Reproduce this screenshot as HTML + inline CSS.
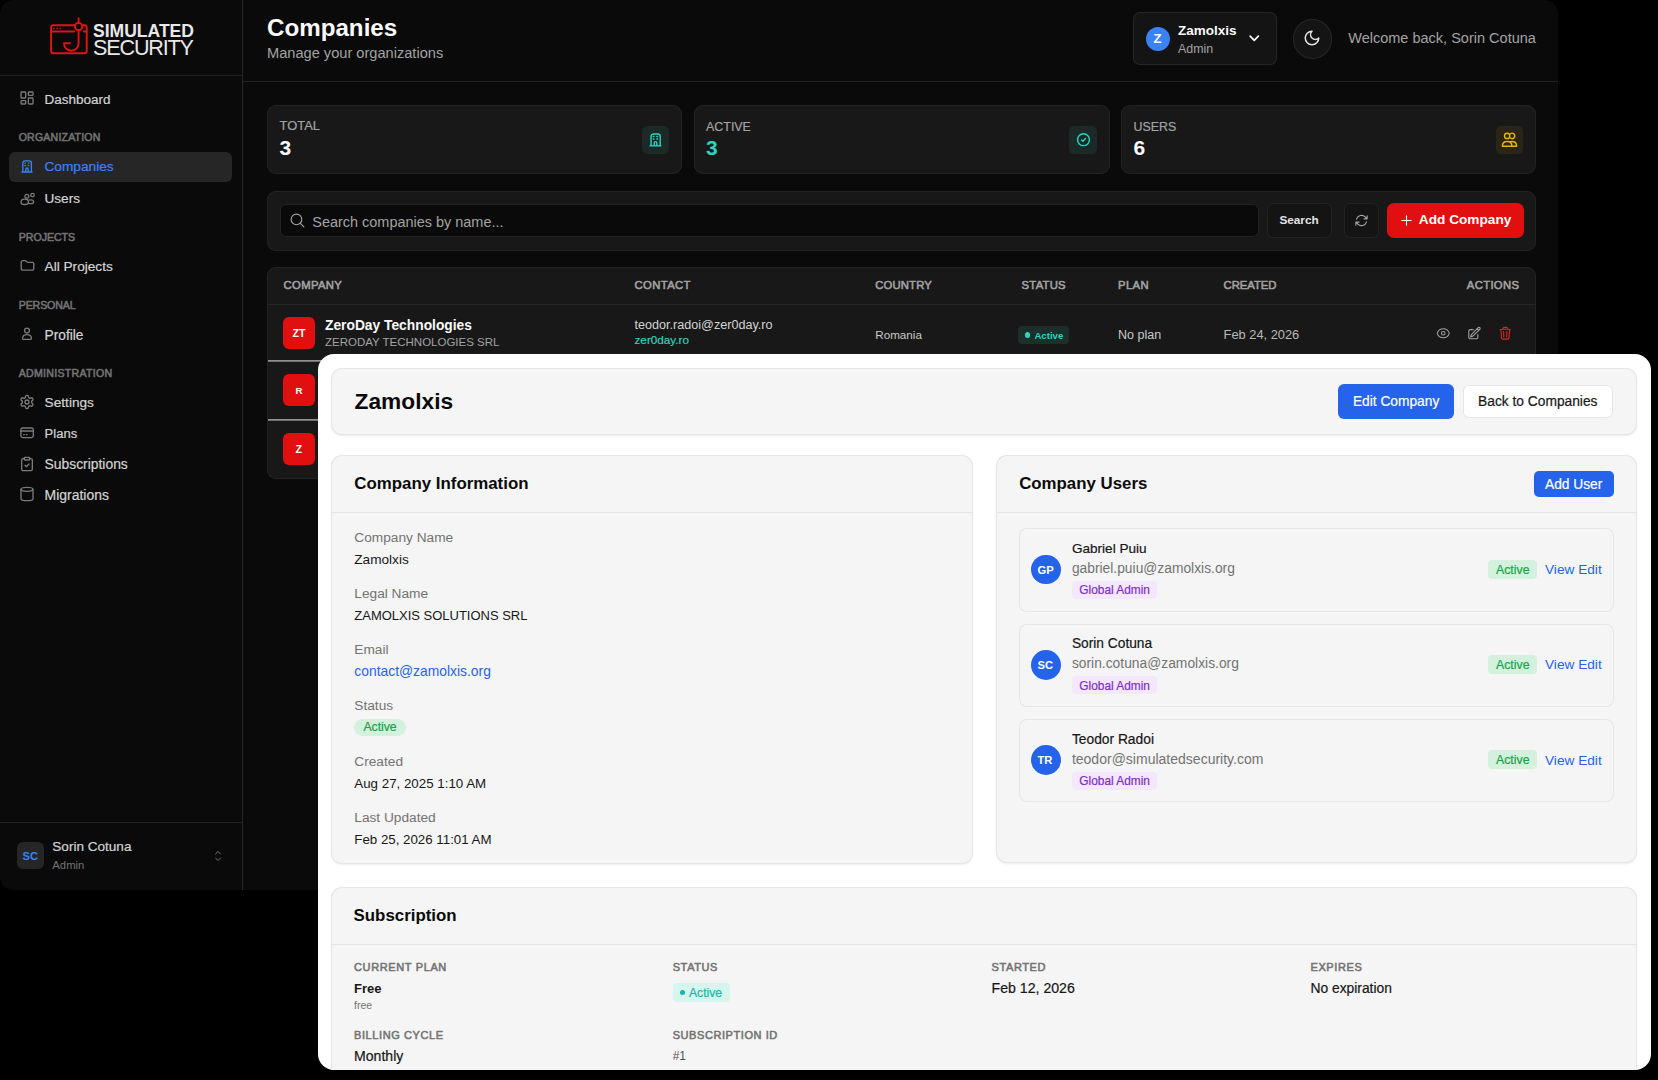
<!DOCTYPE html><html><head><meta charset="utf-8"><style>
html,body{margin:0;padding:0;background:#000;}
body{width:1658px;height:1080px;overflow:hidden;position:relative;font-family:"Liberation Sans",sans-serif;}
.t{position:absolute;white-space:nowrap;line-height:1;}
.r{position:absolute;}
#dark{position:absolute;left:0;top:0;width:1558px;height:890px;background:#0a0a0a;border-radius:14px;overflow:hidden;}
#light{position:absolute;left:318px;top:354px;width:1333px;height:716px;background:#fff;border-radius:16px;overflow:hidden;}
</style></head><body>
<div id="dark">
<div class="r" style="left:242.00px;top:0.00px;width:1.00px;height:890.00px;background:#262626;"></div>
<div class="r" style="left:0.00px;top:75.00px;width:242.00px;height:1.00px;background:#222222;"></div>
<div class="r" style="left:0.00px;top:822.00px;width:242.00px;height:1.00px;background:#222222;"></div>
<div class="r" style="left:243.00px;top:81.00px;width:1315.00px;height:1.00px;background:#222222;"></div>
<svg class="r" style="left:46.00px;top:14.00px;" width="46" height="46" viewBox="0 0 46 46" fill="none" stroke="#e01414" stroke-width="1.9" stroke-linecap="round" stroke-linejoin="round"><path d="M28.9 11.2H7.1A2 2 0 0 0 5.1 13.2V37.3A2 2 0 0 0 7.1 39.3H38.7A2 2 0 0 0 40.7 37.3V13.2A2 2 0 0 0 38.7 11.2H36.3"/><path d="M5.1 17.5H28.1M37.7 17.5H40.7"/><circle cx="32.6" cy="12.6" r="3.7"/><path d="M32.6 4.1V8.9M32.6 16.3V29.6A7.3 7.1 0 0 1 18 29.6V29.3H24"/><path d="M7.9 14.5h.1M11 14.5h.1M14.3 14.5h.1" stroke-width="1.6"/></svg>
<div class="t" style="left:93.00px;top:22.96px;font-size:17.54px;color:#e8e8e8;font-weight:700;">SIMULATED</div>
<div class="t" style="left:93.00px;top:36.63px;font-size:21.60px;color:#e8e8e8;letter-spacing:-1.173px;">SECURITY</div>
<svg class="r" style="left:18.60px;top:90.30px;" width="16" height="16" viewBox="0 0 16 16" fill="none" stroke="#7a7a7a" stroke-width="1.33" stroke-linecap="round" stroke-linejoin="round"><rect x="2" y="2" width="4.67" height="6" rx=".67"/><rect x="9.33" y="2" width="4.67" height="3.33" rx=".67"/><rect x="9.33" y="8" width="4.67" height="6" rx=".67"/><rect x="2" y="10.67" width="4.67" height="3.33" rx=".67"/></svg>
<div class="t" style="left:44.50px;top:92.59px;font-size:13.49px;color:#d4d4d4;-webkit-text-stroke:0.2px;">Dashboard</div>
<div class="t" style="left:18.70px;top:131.83px;font-size:10.60px;color:#737373;-webkit-text-stroke:0.55px;letter-spacing:0.173px;">ORGANIZATION</div>
<div class="r" style="left:9.00px;top:152.00px;width:223.00px;height:30.00px;background:#262626;border-radius:6px;"></div>
<svg class="r" style="left:18.60px;top:158.10px;" width="16" height="16" viewBox="0 0 16 16" fill="none" stroke="#3b82f6" stroke-width="1.33" stroke-linecap="round" stroke-linejoin="round"><path d="M2.9 14H13.1M3.8 14V5A2.2 2.2 0 0 1 6 2.8H10.2A2.2 2.2 0 0 1 12.4 5V14M6.8 14V11.2A1.2 1.2 0 0 1 9.2 11.2V14M5.9 5.1h.6M9.3 5.1h.6M5.9 7.5h.6M9.3 7.5h.6"/></svg>
<div class="t" style="left:44.50px;top:160.43px;font-size:13.68px;color:#3b82f6;-webkit-text-stroke:0.2px;">Companies</div>
<svg class="r" style="left:18.60px;top:190.50px;" width="16" height="16" viewBox="0 0 16 16" fill="none" stroke="#7a7a7a" stroke-width="1.33" stroke-linecap="round" stroke-linejoin="round"><circle cx="7.9" cy="5.3" r="1.9"/><circle cx="13.5" cy="4.1" r="1.8"/><path d="M2 10.9C2 9 3.6 8.2 5.7 8.2S9.4 9 9.4 10.9 7.8 13.5 5.7 13.5 2 12.8 2 10.9Z"/><path d="M9.9 9.2C10.5 9 11.2 8.9 12 8.9 13.5 8.9 14.6 9.6 14.6 10.9S13.5 12.7 12 12.7C11.1 12.7 10.3 12.6 9.7 12.3"/></svg>
<div class="t" style="left:44.50px;top:191.99px;font-size:13.60px;color:#d4d4d4;-webkit-text-stroke:0.2px;">Users</div>
<div class="t" style="left:18.80px;top:231.73px;font-size:10.60px;color:#737373;-webkit-text-stroke:0.55px;letter-spacing:-0.034px;">PROJECTS</div>
<svg class="r" style="left:18.60px;top:257.90px;" width="16" height="16" viewBox="0 0 16 16" fill="none" stroke="#7a7a7a" stroke-width="1.33" stroke-linecap="round" stroke-linejoin="round"><path d="M2.2 4.2A1.5 1.5 0 0 1 3.7 2.7H6.2A1.2 1.2 0 0 1 7.1 3.1L7.8 3.9A1.2 1.2 0 0 0 8.7 4.3H13.3A1.5 1.5 0 0 1 14.8 5.8V10.6A1.5 1.5 0 0 1 13.3 12.1H3.7A1.5 1.5 0 0 1 2.2 10.6Z"/></svg>
<div class="t" style="left:44.60px;top:259.57px;font-size:13.63px;color:#d4d4d4;-webkit-text-stroke:0.2px;">All Projects</div>
<div class="t" style="left:18.70px;top:299.73px;font-size:10.60px;color:#737373;-webkit-text-stroke:0.55px;letter-spacing:-0.104px;">PERSONAL</div>
<svg class="r" style="left:18.60px;top:326.10px;" width="16" height="16" viewBox="0 0 16 16" fill="none" stroke="#7a7a7a" stroke-width="1.33" stroke-linecap="round" stroke-linejoin="round"><circle cx="8" cy="4.6" r="2.4"/><path d="M3.6 12.4C3.6 10 5.6 8.7 8 8.7S12.4 10 12.4 12.4C12.4 13.1 11.9 13.4 11.2 13.4H4.8C4.1 13.4 3.6 13.1 3.6 12.4Z"/></svg>
<div class="t" style="left:44.60px;top:328.59px;font-size:13.72px;color:#d4d4d4;-webkit-text-stroke:0.2px;">Profile</div>
<div class="t" style="left:18.70px;top:367.63px;font-size:10.60px;color:#737373;-webkit-text-stroke:0.55px;letter-spacing:0.277px;">ADMINISTRATION</div>
<svg class="r" style="left:18.60px;top:393.50px;" width="16" height="16" viewBox="0 0 16 16" fill="none" stroke="#7a7a7a" stroke-width="1.33" stroke-linecap="round" stroke-linejoin="round"><g transform="scale(.6667)"><path d="M12.22 2h-.44a2 2 0 0 0-2 2v.18a2 2 0 0 1-1 1.73l-.43.25a2 2 0 0 1-2 0l-.15-.08a2 2 0 0 0-2.73.73l-.22.38a2 2 0 0 0 .73 2.73l.15.1a2 2 0 0 1 1 1.72v.51a2 2 0 0 1-1 1.74l-.15.09a2 2 0 0 0-.73 2.73l.22.38a2 2 0 0 0 2.73.73l.15-.08a2 2 0 0 1 2 0l.43.25a2 2 0 0 1 1 1.73V20a2 2 0 0 0 2 2h.44a2 2 0 0 0 2-2v-.18a2 2 0 0 1 1-1.73l.43-.25a2 2 0 0 1 2 0l.15.08a2 2 0 0 0 2.73-.73l.22-.39a2 2 0 0 0-.73-2.73l-.15-.08a2 2 0 0 1-1-1.74v-.5a2 2 0 0 1 1-1.74l.15-.09a2 2 0 0 0 .73-2.73l-.22-.38a2 2 0 0 0-2.73-.73l-.15.08a2 2 0 0 1-2 0l-.43-.25a2 2 0 0 1-1-1.73V4a2 2 0 0 0-2-2z" stroke-width="2"/><circle cx="12" cy="12" r="3" stroke-width="2"/></g></svg>
<div class="t" style="left:44.60px;top:395.63px;font-size:13.67px;color:#d4d4d4;-webkit-text-stroke:0.2px;">Settings</div>
<svg class="r" style="left:18.60px;top:425.00px;" width="16" height="16" viewBox="0 0 16 16" fill="none" stroke="#7a7a7a" stroke-width="1.33" stroke-linecap="round" stroke-linejoin="round"><rect x="1.9" y="3" width="12.4" height="9.6" rx="1.8"/><path d="M1.9 6H14.3M4.6 9.6h.7M7.4 9.6h.7"/></svg>
<div class="t" style="left:44.60px;top:427.27px;font-size:13.03px;color:#d4d4d4;-webkit-text-stroke:0.2px;">Plans</div>
<svg class="r" style="left:18.60px;top:455.70px;" width="16" height="16" viewBox="0 0 16 16" fill="none" stroke="#7a7a7a" stroke-width="1.33" stroke-linecap="round" stroke-linejoin="round"><g transform="scale(.6667)" stroke-width="2"><rect width="8" height="4" x="8" y="2" rx="1" ry="1"/><path d="M16 4h2a2 2 0 0 1 2 2v14a2 2 0 0 1-2 2H6a2 2 0 0 1-2-2V6a2 2 0 0 1 2-2h2"/><path d="m9 14 2 2 4-4"/></g></svg>
<div class="t" style="left:44.60px;top:458.07px;font-size:13.86px;color:#d4d4d4;-webkit-text-stroke:0.2px;">Subscriptions</div>
<svg class="r" style="left:18.80px;top:486.10px;" width="16" height="16" viewBox="0 0 16 16" fill="none" stroke="#7a7a7a" stroke-width="1.33" stroke-linecap="round" stroke-linejoin="round"><g transform="scale(.6667)" stroke-width="2"><ellipse cx="12" cy="5" rx="9" ry="3"/><path d="M3 5V19A9 3 0 0 0 21 19V5"/></g></svg>
<div class="t" style="left:44.60px;top:488.61px;font-size:13.94px;color:#d4d4d4;-webkit-text-stroke:0.2px;">Migrations</div>
<div class="r" style="left:17.00px;top:842.00px;width:27.00px;height:27.00px;background:#262626;border-radius:6px;"></div>
<div class="t" style="left:22.50px;top:850.56px;font-size:11.16px;color:#3b82f6;font-weight:700;">SC</div>
<div class="t" style="left:52.30px;top:840.02px;font-size:13.57px;color:#d4d4d4;-webkit-text-stroke:0.2px;">Sorin Cotuna</div>
<div class="t" style="left:52.30px;top:860.02px;font-size:11.32px;color:#737373;">Admin</div>
<svg class="r" style="left:209.50px;top:847.50px;" width="16" height="16" viewBox="0 0 24 24" fill="none" stroke="#737373" stroke-width="1.5" stroke-linecap="round" stroke-linejoin="round"><path d="M8.25 15 12 18.75 15.75 15m-7.5-6L12 5.25 15.75 9"/></svg>
<div class="t" style="left:267.00px;top:16.15px;font-size:24.17px;color:#fafafa;font-weight:700;">Companies</div>
<div class="t" style="left:267.00px;top:46.34px;font-size:14.61px;color:#a3a3a3;">Manage your organizations</div>
<div class="r" style="left:1133.00px;top:12.00px;width:144.00px;height:53.00px;background:#141414;border-radius:7px;box-shadow:inset 0 0 0 1px #262626;"></div>
<div class="r" style="left:1146.00px;top:26.50px;width:24.00px;height:24.00px;background:#3b82f6;border-radius:12px;"></div>
<div class="t" style="left:1153.50px;top:31.72px;font-size:13.09px;color:#fff;font-weight:700;">Z</div>
<div class="t" style="left:1178.00px;top:23.88px;font-size:13.49px;color:#fafafa;font-weight:700;">Zamolxis</div>
<div class="t" style="left:1178.00px;top:43.00px;font-size:12.42px;color:#a3a3a3;">Admin</div>
<svg class="r" style="left:1245.70px;top:30.00px;" width="16.5" height="16.5" viewBox="0 0 24 24" fill="none" stroke="#fafafa" stroke-width="2.5" stroke-linecap="round" stroke-linejoin="round"><path d="m6 9 6 6 6-6"/></svg>
<div class="r" style="left:1292.50px;top:19.00px;width:39.50px;height:39.50px;background:#141414;border-radius:20px;box-shadow:inset 0 0 0 1px #262626;"></div>
<svg class="r" style="left:1303.20px;top:28.90px;" width="18" height="18" viewBox="0 0 24 24" fill="none" stroke="#e5e5e5" stroke-width="2" stroke-linecap="round" stroke-linejoin="round"><path d="M12 3a6 6 0 0 0 9 9 9 9 0 1 1-9-9Z"/></svg>
<div class="t" style="left:1348.20px;top:31.21px;font-size:14.53px;color:#a3a3a3;">Welcome back, Sorin Cotuna</div>
<div class="r" style="left:267.00px;top:105.30px;width:415.00px;height:68.50px;background:#181818;border-radius:9px;box-shadow:inset 0 0 0 1px #232323;"></div>
<div class="t" style="left:279.60px;top:120.08px;font-size:12.91px;color:#a3a3a3;-webkit-text-stroke:0.2px;">TOTAL</div>
<div class="t" style="left:279.60px;top:137.23px;font-size:21.00px;color:#fafafa;font-weight:700;">3</div>
<div class="r" style="left:641.80px;top:126.00px;width:27.50px;height:27.50px;background:#1b2a27;border-radius:5px;"></div>
<svg class="r" style="left:647.05px;top:131.25px;" width="17" height="17" viewBox="0 0 16 16" fill="none" stroke="#2dd4bf" stroke-width="1.33" stroke-linecap="round" stroke-linejoin="round"><path d="M2.9 14H13.1M3.8 14V5A2.2 2.2 0 0 1 6 2.8H10.2A2.2 2.2 0 0 1 12.4 5V14M6.8 14V11.2A1.2 1.2 0 0 1 9.2 11.2V14M5.9 5.1h.6M9.3 5.1h.6M5.9 7.5h.6M9.3 7.5h.6"/></svg>
<div class="r" style="left:693.50px;top:105.30px;width:416.00px;height:68.50px;background:#181818;border-radius:9px;box-shadow:inset 0 0 0 1px #232323;"></div>
<div class="t" style="left:706.10px;top:120.51px;font-size:12.40px;color:#a3a3a3;-webkit-text-stroke:0.2px;">ACTIVE</div>
<div class="t" style="left:706.10px;top:137.23px;font-size:21.00px;color:#2dd4bf;font-weight:700;">3</div>
<div class="r" style="left:1069.30px;top:126.00px;width:27.50px;height:27.50px;background:#1b2a27;border-radius:5px;"></div>
<svg class="r" style="left:1074.55px;top:131.25px;" width="17" height="17" viewBox="0 0 16 16" fill="none" stroke="#2dd4bf" stroke-width="1.33" stroke-linecap="round" stroke-linejoin="round"><circle cx="8" cy="8.2" r="5.6"/><path d="M6.1 8.4 7.5 9.7 9.9 7.1"/></svg>
<div class="r" style="left:1121.00px;top:105.30px;width:415.00px;height:68.50px;background:#181818;border-radius:9px;box-shadow:inset 0 0 0 1px #232323;"></div>
<div class="t" style="left:1133.60px;top:120.51px;font-size:12.40px;color:#a3a3a3;-webkit-text-stroke:0.2px;">USERS</div>
<div class="t" style="left:1133.60px;top:137.23px;font-size:21.00px;color:#fafafa;font-weight:700;">6</div>
<div class="r" style="left:1495.80px;top:126.00px;width:27.50px;height:27.50px;background:#2a2514;border-radius:5px;"></div>
<svg class="r" style="left:1501.05px;top:131.25px;" width="17" height="17" viewBox="0 0 16 16" fill="none" stroke="#eab308" stroke-width="1.33" stroke-linecap="round" stroke-linejoin="round"><circle cx="5.8" cy="4.6" r="2.5"/><path d="M8.9 2.6A2.5 2.5 0 1 1 8.9 6.6"/><path d="M1.3 14.4C1.3 11.4 3.3 9.9 5.8 9.9S10.3 11.4 10.3 14.4Z"/><path d="M8.7 10.1C9.2 9.95 9.7 9.9 10.2 9.9 12.7 9.9 14.7 11.4 14.7 14.4H10.3"/></svg>
<div class="r" style="left:267.00px;top:190.50px;width:1269.00px;height:60.00px;background:#181818;border-radius:9px;box-shadow:inset 0 0 0 1px #232323;"></div>
<div class="r" style="left:279.50px;top:203.80px;width:979.00px;height:33.50px;background:#0a0a0a;border-radius:6px;box-shadow:inset 0 0 0 1px #232323;"></div>
<svg class="r" style="left:288.50px;top:212.00px;" width="17" height="17" viewBox="0 0 24 24" fill="none" stroke="#a3a3a3" stroke-width="1.6" stroke-linecap="round" stroke-linejoin="round"><path d="m21 21-5.197-5.197m0 0A7.5 7.5 0 1 0 5.196 5.196a7.5 7.5 0 0 0 10.607 10.607Z"/></svg>
<div class="t" style="left:312.30px;top:215.47px;font-size:14.46px;color:#a3a3a3;">Search companies by name...</div>
<div class="r" style="left:1267.00px;top:203.00px;width:64.50px;height:34.50px;background:#141414;border-radius:6px;box-shadow:inset 0 0 0 1px #232323;"></div>
<div class="t" style="left:1279.40px;top:214.23px;font-size:11.78px;color:#e5e5e5;font-weight:700;">Search</div>
<div class="r" style="left:1343.50px;top:203.00px;width:35.00px;height:34.50px;background:#141414;border-radius:6px;box-shadow:inset 0 0 0 1px #232323;"></div>
<svg class="r" style="left:1354.00px;top:213.00px;" width="15" height="15" viewBox="0 0 24 24" fill="none" stroke="#a3a3a3" stroke-width="1.8" stroke-linecap="round" stroke-linejoin="round"><path d="M16.023 9.348h4.992v-.001M2.985 19.644v-4.992m0 0h4.992m-4.993 0 3.181 3.183a8.25 8.25 0 0 0 13.803-3.7M4.031 9.865a8.25 8.25 0 0 1 13.803-3.7l3.181 3.182m0-4.991v4.99"/></svg>
<div class="r" style="left:1387.00px;top:203.00px;width:136.50px;height:35.00px;background:#e10f0f;border-radius:7px;"></div>
<svg class="r" style="left:1398.50px;top:213.00px;" width="15" height="15" viewBox="0 0 24 24" fill="none" stroke="#fff" stroke-width="1.8" stroke-linecap="round" stroke-linejoin="round"><path d="M12 4.5v15m7.5-7.5h-15"/></svg>
<div class="t" style="left:1418.80px;top:213.24px;font-size:13.66px;color:#fff;font-weight:700;">Add Company</div>
<div class="r" style="left:267.00px;top:267.30px;width:1269.00px;height:211.50px;background:#181818;border-radius:9px;box-shadow:inset 0 0 0 1px #232323;"></div>
<div class="r" style="left:267.00px;top:304.00px;width:1269.00px;height:1.00px;background:#262626;"></div>
<div class="t" style="left:283.60px;top:280.34px;font-size:11.30px;color:#a3a3a3;-webkit-text-stroke:0.55px;letter-spacing:0.334px;">COMPANY</div>
<div class="t" style="left:634.50px;top:280.34px;font-size:11.30px;color:#a3a3a3;-webkit-text-stroke:0.55px;letter-spacing:0.371px;">CONTACT</div>
<div class="t" style="left:875.20px;top:280.34px;font-size:11.30px;color:#a3a3a3;-webkit-text-stroke:0.55px;letter-spacing:0.156px;">COUNTRY</div>
<div class="t" style="left:1021.60px;top:280.34px;font-size:11.30px;color:#a3a3a3;-webkit-text-stroke:0.55px;letter-spacing:0.221px;">STATUS</div>
<div class="t" style="left:1118.10px;top:280.34px;font-size:11.30px;color:#a3a3a3;-webkit-text-stroke:0.55px;letter-spacing:0.328px;">PLAN</div>
<div class="t" style="left:1223.60px;top:280.34px;font-size:11.30px;color:#a3a3a3;-webkit-text-stroke:0.55px;letter-spacing:-0.059px;">CREATED</div>
<div class="t" style="left:1466.80px;top:280.34px;font-size:11.30px;color:#a3a3a3;-webkit-text-stroke:0.55px;letter-spacing:0.329px;">ACTIONS</div>
<div class="r" style="left:267.50px;top:360.00px;width:1268.00px;height:2.00px;background:linear-gradient(#a0a0a0,#606060);"></div>
<div class="r" style="left:267.50px;top:419.00px;width:1268.00px;height:2.00px;background:linear-gradient(#a0a0a0,#606060);"></div>
<div class="r" style="left:283.20px;top:317.00px;width:31.60px;height:31.70px;background:#e10f0f;border-radius:6px;"></div>
<div class="t" style="left:292.50px;top:328.00px;font-size:10.64px;color:#fff;font-weight:700;">ZT</div>
<div class="t" style="left:325.00px;top:319.22px;font-size:13.80px;color:#fafafa;font-weight:700;">ZeroDay Technologies</div>
<div class="t" style="left:325.00px;top:336.97px;font-size:11.50px;color:#a3a3a3;">ZERODAY TECHNOLOGIES SRL</div>
<div class="t" style="left:634.50px;top:318.54px;font-size:12.61px;color:#d4d4d4;">teodor.radoi@zer0day.ro</div>
<div class="t" style="left:634.50px;top:334.48px;font-size:11.72px;color:#2dd4bf;-webkit-text-stroke:0.2px;">zer0day.ro</div>
<div class="t" style="left:875.20px;top:328.61px;font-size:11.69px;color:#c9c9c9;">Romania</div>
<div class="r" style="left:1018.30px;top:326.00px;width:50.60px;height:18.30px;background:#1b2f2b;border-radius:4px;"></div>
<div class="r" style="left:1024.50px;top:332.00px;width:5.50px;height:5.50px;background:#2dd4bf;border-radius:3px;"></div>
<div class="t" style="left:1034.40px;top:330.85px;font-size:9.63px;color:#2dd4bf;font-weight:700;">Active</div>
<div class="t" style="left:1118.10px;top:328.92px;font-size:12.50px;color:#c9c9c9;">No plan</div>
<div class="t" style="left:1223.60px;top:328.65px;font-size:12.83px;color:#b8b8b8;">Feb 24, 2026</div>
<svg class="r" style="left:1435.75px;top:325.55px;" width="14.5" height="14.5" viewBox="0 0 24 24" fill="none" stroke="#a3a3a3" stroke-width="1.7" stroke-linecap="round" stroke-linejoin="round"><path d="M2.036 12.322a1.012 1.012 0 0 1 0-.639C3.423 7.51 7.36 4.5 12 4.5c4.638 0 8.573 3.007 9.963 7.178.07.207.07.431 0 .639C20.577 16.49 16.64 19.5 12 19.5c-4.638 0-8.573-3.007-9.963-7.178Z"/><path d="M15 12a3 3 0 1 1-6 0 3 3 0 0 1 6 0Z"/></svg>
<svg class="r" style="left:1467.40px;top:325.50px;" width="14.5" height="14.5" viewBox="0 0 24 24" fill="none" stroke="#a3a3a3" stroke-width="1.8" stroke-linecap="round" stroke-linejoin="round"><path d="m16.862 4.487 1.687-1.688a1.875 1.875 0 1 1 2.652 2.652L10.582 16.07a4.5 4.5 0 0 1-1.897 1.13L6 18l.8-2.685a4.5 4.5 0 0 1 1.13-1.897l8.932-8.931Zm0 0L19.5 7.125M18 14v4.75A2.25 2.25 0 0 1 15.75 21H5.25A2.25 2.25 0 0 1 3 18.75V8.25A2.25 2.25 0 0 1 5.25 6H10"/></svg>
<svg class="r" style="left:1498.30px;top:325.55px;" width="14.5" height="14.5" viewBox="0 0 24 24" fill="none" stroke="#dc2626" stroke-width="1.8" stroke-linecap="round" stroke-linejoin="round"><path d="m14.74 9-.346 9m-4.788 0L9.26 9m9.968-3.21c.342.052.682.107 1.022.166m-1.022-.165L18.16 19.673a2.25 2.25 0 0 1-2.244 2.077H8.084a2.25 2.25 0 0 1-2.244-2.077L4.772 5.79m14.456 0a48.108 48.108 0 0 0-3.478-.397m-12 .562c.34-.059.68-.114 1.022-.165m0 0a48.11 48.11 0 0 1 3.478-.397m7.5 0v-.916c0-1.18-.91-2.164-2.09-2.201a51.964 51.964 0 0 0-3.32 0c-1.18.037-2.09 1.022-2.09 2.201v.916m7.5 0a48.667 48.667 0 0 0-7.5 0"/></svg>
<div class="r" style="left:283.20px;top:374.00px;width:31.60px;height:31.60px;background:#e10f0f;border-radius:6px;"></div>
<div class="t" style="left:295.50px;top:385.80px;font-size:9.70px;color:#fff;font-weight:700;">R</div>
<div class="r" style="left:283.20px;top:433.00px;width:31.60px;height:31.70px;background:#e10f0f;border-radius:6px;"></div>
<div class="t" style="left:295.50px;top:444.00px;font-size:10.64px;color:#fff;font-weight:700;">Z</div>
</div>
<div id="light">
<div class="r" style="left:12.50px;top:14.20px;width:1306.00px;height:67.00px;background:#f5f5f5;border-radius:11px;box-shadow:inset 0 0 0 1px #e6e6e6,0 1px 2px rgba(0,0,0,.08);"></div>
<div class="t" style="left:36.60px;top:35.98px;font-size:22.72px;color:#0a0a0a;font-weight:700;">Zamolxis</div>
<div class="r" style="left:1020.00px;top:30.20px;width:116.40px;height:34.50px;background:#2563eb;border-radius:6px;"></div>
<div class="t" style="left:1034.90px;top:41.36px;font-size:13.76px;color:#fff;-webkit-text-stroke:0.2px;">Edit Company</div>
<div class="r" style="left:1145.00px;top:30.80px;width:150.10px;height:33.50px;background:#fff;border-radius:6px;box-shadow:inset 0 0 0 1px #e6e6e6;"></div>
<div class="t" style="left:1160.10px;top:41.34px;font-size:13.78px;color:#171717;-webkit-text-stroke:0.2px;">Back to Companies</div>
<div class="r" style="left:12.50px;top:101.30px;width:642.00px;height:408.50px;background:#f5f5f5;border-radius:11px;box-shadow:inset 0 0 0 1px #e6e6e6,0 1px 2px rgba(0,0,0,.08);"></div>
<div class="r" style="left:13.00px;top:158.00px;width:641.00px;height:1.00px;background:#e6e6e6;"></div>
<div class="t" style="left:36.30px;top:122.32px;font-size:16.88px;color:#0a0a0a;font-weight:700;">Company Information</div>
<div class="t" style="left:36.30px;top:177.21px;font-size:13.70px;color:#737373;">Company Name</div>
<div class="t" style="left:36.30px;top:198.68px;font-size:13.62px;color:#171717;">Zamolxis</div>
<div class="t" style="left:36.30px;top:233.21px;font-size:13.70px;color:#737373;">Legal Name</div>
<div class="t" style="left:36.30px;top:255.21px;font-size:12.99px;color:#171717;">ZAMOLXIS SOLUTIONS SRL</div>
<div class="t" style="left:36.30px;top:289.21px;font-size:13.70px;color:#737373;">Email</div>
<div class="t" style="left:36.30px;top:311.48px;font-size:13.86px;color:#2563eb;">contact@zamolxis.org</div>
<div class="t" style="left:36.30px;top:345.21px;font-size:13.70px;color:#737373;">Status</div>
<div class="t" style="left:36.30px;top:401.21px;font-size:13.70px;color:#737373;">Created</div>
<div class="t" style="left:36.30px;top:422.92px;font-size:13.34px;color:#171717;">Aug 27, 2025 1:10 AM</div>
<div class="t" style="left:36.30px;top:457.21px;font-size:13.70px;color:#737373;">Last Updated</div>
<div class="t" style="left:36.30px;top:478.95px;font-size:13.30px;color:#171717;">Feb 25, 2026 11:01 AM</div>
<div class="r" style="left:35.80px;top:364.50px;width:51.80px;height:17.80px;background:#d3f1dd;border-radius:9px;"></div>
<div class="t" style="left:45.40px;top:367.15px;font-size:12.23px;color:#16a34a;-webkit-text-stroke:0.2px;">Active</div>
<div class="r" style="left:677.80px;top:101.30px;width:641.00px;height:408.00px;background:#f5f5f5;border-radius:11px;box-shadow:inset 0 0 0 1px #e6e6e6,0 1px 2px rgba(0,0,0,.08);"></div>
<div class="r" style="left:678.30px;top:158.00px;width:640.00px;height:1.00px;background:#e6e6e6;"></div>
<div class="t" style="left:701.20px;top:121.96px;font-size:16.84px;color:#0a0a0a;font-weight:700;">Company Users</div>
<div class="r" style="left:1216.00px;top:116.80px;width:80.00px;height:26.00px;background:#2563eb;border-radius:5px;"></div>
<div class="t" style="left:1227.00px;top:123.57px;font-size:13.75px;color:#fff;-webkit-text-stroke:0.2px;">Add User</div>
<div class="r" style="left:701.40px;top:174.30px;width:594.50px;height:83.30px;background:#f5f5f5;border-radius:8px;box-shadow:inset 0 0 0 1px #e6e6e6;"></div>
<div class="r" style="left:713.10px;top:200.80px;width:29.60px;height:29.60px;background:#2563eb;border-radius:15px;"></div>
<div class="t" style="left:719.50px;top:210.52px;font-size:11.20px;color:#fff;font-weight:700;">GP</div>
<div class="t" style="left:753.90px;top:188.40px;font-size:13.59px;color:#171717;-webkit-text-stroke:0.2px;">Gabriel Puiu</div>
<div class="t" style="left:753.90px;top:208.11px;font-size:13.82px;color:#737373;">gabriel.puiu@zamolxis.org</div>
<div class="r" style="left:753.90px;top:227.10px;width:85.50px;height:18.20px;background:#f3e8ff;border-radius:4px;"></div>
<div class="t" style="left:761.30px;top:231.44px;font-size:11.89px;color:#7e2fc0;-webkit-text-stroke:0.2px;">Global Admin</div>
<div class="r" style="left:1169.70px;top:206.00px;width:49.60px;height:19.00px;background:#d3f1dd;border-radius:4px;"></div>
<div class="t" style="left:1178.00px;top:209.59px;font-size:12.30px;color:#16a34a;-webkit-text-stroke:0.2px;">Active</div>
<div class="t" style="left:1227.00px;top:209.24px;font-size:13.66px;color:#2563eb;">View Edit</div>
<div class="r" style="left:701.40px;top:269.50px;width:594.50px;height:83.30px;background:#f5f5f5;border-radius:8px;box-shadow:inset 0 0 0 1px #e6e6e6;"></div>
<div class="r" style="left:713.10px;top:296.00px;width:29.60px;height:29.60px;background:#2563eb;border-radius:15px;"></div>
<div class="t" style="left:719.50px;top:305.72px;font-size:11.20px;color:#fff;font-weight:700;">SC</div>
<div class="t" style="left:753.90px;top:283.46px;font-size:13.75px;color:#171717;-webkit-text-stroke:0.2px;">Sorin Cotuna</div>
<div class="t" style="left:753.90px;top:303.30px;font-size:13.83px;color:#737373;">sorin.cotuna@zamolxis.org</div>
<div class="r" style="left:753.90px;top:322.30px;width:85.50px;height:18.20px;background:#f3e8ff;border-radius:4px;"></div>
<div class="t" style="left:761.30px;top:326.64px;font-size:11.89px;color:#7e2fc0;-webkit-text-stroke:0.2px;">Global Admin</div>
<div class="r" style="left:1169.70px;top:301.20px;width:49.60px;height:19.00px;background:#d3f1dd;border-radius:4px;"></div>
<div class="t" style="left:1178.00px;top:304.79px;font-size:12.30px;color:#16a34a;-webkit-text-stroke:0.2px;">Active</div>
<div class="t" style="left:1227.00px;top:304.44px;font-size:13.66px;color:#2563eb;">View Edit</div>
<div class="r" style="left:701.40px;top:364.70px;width:594.50px;height:83.30px;background:#f5f5f5;border-radius:8px;box-shadow:inset 0 0 0 1px #e6e6e6;"></div>
<div class="r" style="left:713.10px;top:391.20px;width:29.60px;height:29.60px;background:#2563eb;border-radius:15px;"></div>
<div class="t" style="left:719.50px;top:400.92px;font-size:11.20px;color:#fff;font-weight:700;">TR</div>
<div class="t" style="left:753.90px;top:378.62px;font-size:13.80px;color:#171717;-webkit-text-stroke:0.2px;">Teodor Radoi</div>
<div class="t" style="left:753.90px;top:398.34px;font-size:14.02px;color:#737373;">teodor@simulatedsecurity.com</div>
<div class="r" style="left:753.90px;top:417.50px;width:85.50px;height:18.20px;background:#f3e8ff;border-radius:4px;"></div>
<div class="t" style="left:761.30px;top:421.84px;font-size:11.89px;color:#7e2fc0;-webkit-text-stroke:0.2px;">Global Admin</div>
<div class="r" style="left:1169.70px;top:396.40px;width:49.60px;height:19.00px;background:#d3f1dd;border-radius:4px;"></div>
<div class="t" style="left:1178.00px;top:399.99px;font-size:12.30px;color:#16a34a;-webkit-text-stroke:0.2px;">Active</div>
<div class="t" style="left:1227.00px;top:399.64px;font-size:13.66px;color:#2563eb;">View Edit</div>
<div class="r" style="left:12.50px;top:533.40px;width:1306.00px;height:400.00px;background:#f5f5f5;border-radius:11px;box-shadow:inset 0 0 0 1px #e6e6e6,0 1px 2px rgba(0,0,0,.08);"></div>
<div class="r" style="left:13.00px;top:590.00px;width:1305.00px;height:1.00px;background:#e6e6e6;"></div>
<div class="t" style="left:35.60px;top:553.54px;font-size:16.85px;color:#0a0a0a;font-weight:700;">Subscription</div>
<div class="t" style="left:36.00px;top:607.69px;font-size:11.00px;color:#737373;-webkit-text-stroke:0.55px;letter-spacing:0.630px;">CURRENT PLAN</div>
<div class="t" style="left:36.00px;top:627.78px;font-size:13.02px;color:#171717;font-weight:700;">Free</div>
<div class="t" style="left:36.00px;top:645.62px;font-size:10.50px;color:#737373;">free</div>
<div class="t" style="left:354.70px;top:607.69px;font-size:11.00px;color:#737373;-webkit-text-stroke:0.55px;letter-spacing:0.600px;">STATUS</div>
<div class="r" style="left:354.70px;top:629.40px;width:57.50px;height:18.40px;background:#d5f5ee;border-radius:4px;"></div>
<div class="r" style="left:362.00px;top:636.00px;width:5.00px;height:5.00px;background:#14b8a6;border-radius:3px;"></div>
<div class="t" style="left:371.00px;top:632.75px;font-size:12.12px;color:#14b8a6;-webkit-text-stroke:0.2px;">Active</div>
<div class="t" style="left:673.50px;top:607.69px;font-size:11.00px;color:#737373;-webkit-text-stroke:0.55px;letter-spacing:0.600px;">STARTED</div>
<div class="t" style="left:673.50px;top:626.83px;font-size:14.15px;color:#171717;-webkit-text-stroke:0.2px;">Feb 12, 2026</div>
<div class="t" style="left:992.50px;top:607.69px;font-size:11.00px;color:#737373;-webkit-text-stroke:0.55px;letter-spacing:0.600px;">EXPIRES</div>
<div class="t" style="left:992.50px;top:628.31px;font-size:13.82px;color:#171717;-webkit-text-stroke:0.2px;">No expiration</div>
<div class="t" style="left:36.00px;top:675.69px;font-size:11.00px;color:#737373;-webkit-text-stroke:0.55px;letter-spacing:0.600px;">BILLING CYCLE</div>
<div class="t" style="left:36.00px;top:694.59px;font-size:14.08px;color:#171717;-webkit-text-stroke:0.2px;">Monthly</div>
<div class="t" style="left:354.70px;top:675.69px;font-size:11.00px;color:#737373;-webkit-text-stroke:0.55px;letter-spacing:0.574px;">SUBSCRIPTION ID</div>
<div class="t" style="left:354.70px;top:696.35px;font-size:12.00px;color:#525252;">#1</div>
</div>
</body></html>
